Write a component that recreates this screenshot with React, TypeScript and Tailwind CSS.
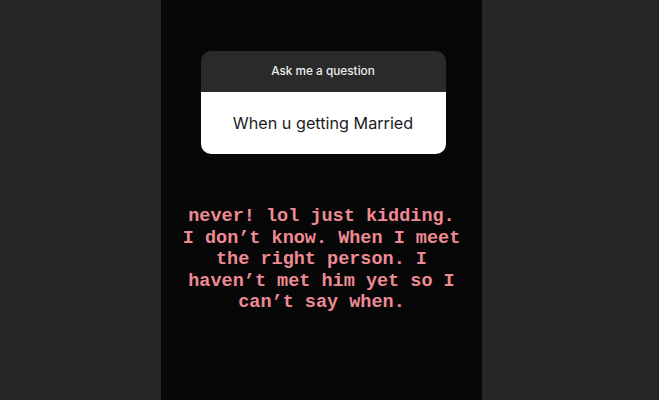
export default function App() {
  return (
    <div className="flex h-[400px] w-[659px] bg-[#262626] pl-[161px]">
      <div className="flex w-[321px] flex-col items-center bg-[#070707] pt-[51px]">
        {/* question sticker */}
        <div className="ml-[3px] w-[245px] overflow-hidden rounded-[10px]">
          <div className="flex h-[41px] items-center justify-center bg-[#2a2a2a] font-['Inter',sans-serif] text-[11.8px] font-medium text-[#ececec]">
            Ask me a question
          </div>
          <div className="flex h-[62px] items-center justify-center bg-white font-['Inter',sans-serif] text-[16.2px] text-[#1c1c1c]">
            When u getting Married
          </div>
        </div>

        <p className="mt-[52px] text-center font-['Liberation_Mono',monospace] text-[18.5px] leading-[21.5px] font-bold text-[#ee8a93]">
          never! lol just kidding.
          <br />
          I don’t know. When I meet
          <br />
          the right person. I
          <br />
          haven’t met him yet so I
          <br />
          can’t say when.
        </p>
      </div>
    </div>
  );
}
